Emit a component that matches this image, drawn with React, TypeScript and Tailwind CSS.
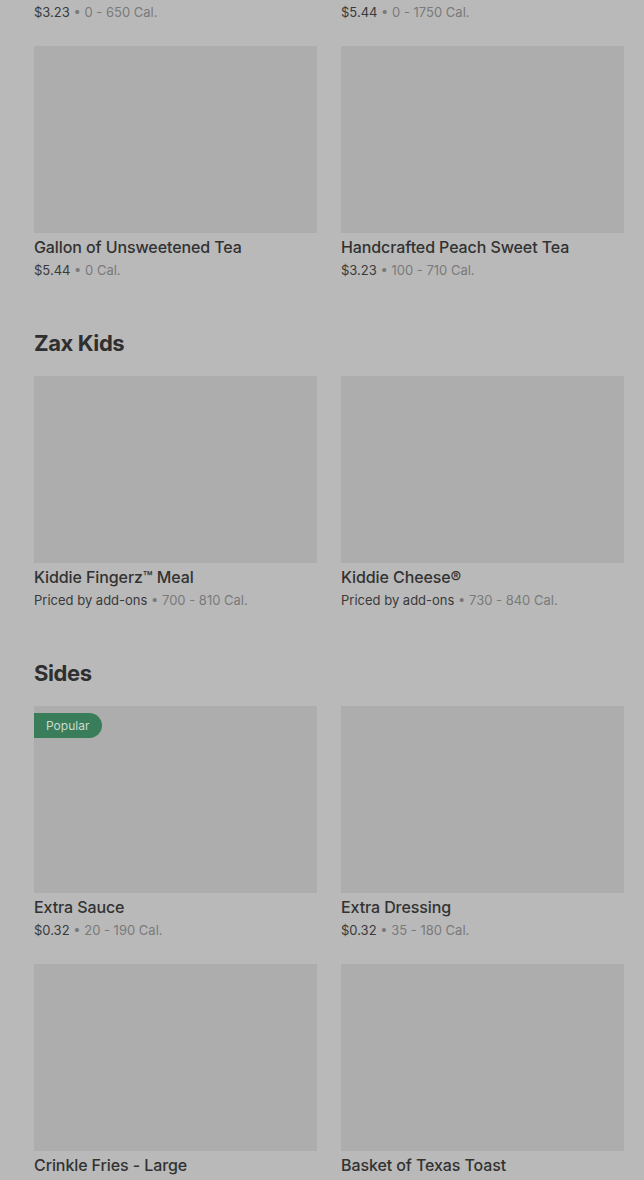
type Item = {
  name: string;
  price?: string;
  cal?: string;
  popular?: boolean;
};

type Section = {
  title?: string;
  items: Item[];
};

const sections: Section[] = [
  {
    items: [
      { name: "", price: "$3.23", cal: "0 - 650 Cal." },
      { name: "", price: "$5.44", cal: "0 - 1750 Cal." },
      { name: "Gallon of Unsweetened Tea", price: "$5.44", cal: "0 Cal." },
      { name: "Handcrafted Peach Sweet Tea", price: "$3.23", cal: "100 - 710 Cal." },
    ],
  },
  {
    title: "Zax Kids",
    items: [
      { name: "Kiddie Fingerz™ Meal", price: "Priced by add-ons", cal: "700 - 810 Cal." },
      { name: "Kiddie Cheese®", price: "Priced by add-ons", cal: "730 - 840 Cal." },
    ],
  },
  {
    title: "Sides",
    items: [
      { name: "Extra Sauce", price: "$0.32", cal: "20 - 190 Cal.", popular: true },
      { name: "Extra Dressing", price: "$0.32", cal: "35 - 180 Cal." },
      // price line of this row sits below the fold
      { name: "Crinkle Fries - Large" },
      { name: "Basket of Texas Toast" },
    ],
  },
];

function MenuCard({ item }: { item: Item }) {
  return (
    <div className="flex flex-col">
      <div className="relative h-[187px] w-full bg-[#adadad]">
        {item.popular && (
          <span className="absolute left-0 top-[7px] rounded-r-full bg-[#3a7d5b] py-[3px] pl-3 pr-[13px] text-[12px] leading-[19px] text-[#c9dccf]">
            Popular
          </span>
        )}
      </div>
      {item.name && (
        <div className="mt-1 text-[16px] font-medium leading-5 tracking-[-0.1px] text-[#323232]">{item.name}</div>
      )}
      {item.price && (
        <div className={`${item.name ? "mt-[3px]" : "mt-[27px]"} text-[13px] leading-5`}>
          <span className="text-[#3a3a3a]">{item.price}</span>
          <span className="text-[#7a7a7a]"> • {item.cal}</span>
        </div>
      )}
    </div>
  );
}

export default function App() {
  return (
    <div className="h-[1180px] overflow-hidden bg-[#b9b9b9] pl-[34px] pr-5 font-['Inter','Liberation_Sans',sans-serif]">
      {/* first row is scrolled past, only its price line peeks in */}
      <div className="-mt-[212px]">
        {sections.map((section, i) => (
          <div key={i} className={i > 0 ? "mt-[47px]" : ""}>
            {section.title && (
              <h2 className="mb-[17px] text-[22px] font-bold leading-8 tracking-[-0.4px] text-[#2f2f2f]">
                {section.title}
              </h2>
            )}
            <div className="grid grid-cols-2 gap-x-6 gap-y-6">
              {section.items.map((item, j) => (
                <MenuCard key={j} item={item} />
              ))}
            </div>
          </div>
        ))}
      </div>
    </div>
  );
}
